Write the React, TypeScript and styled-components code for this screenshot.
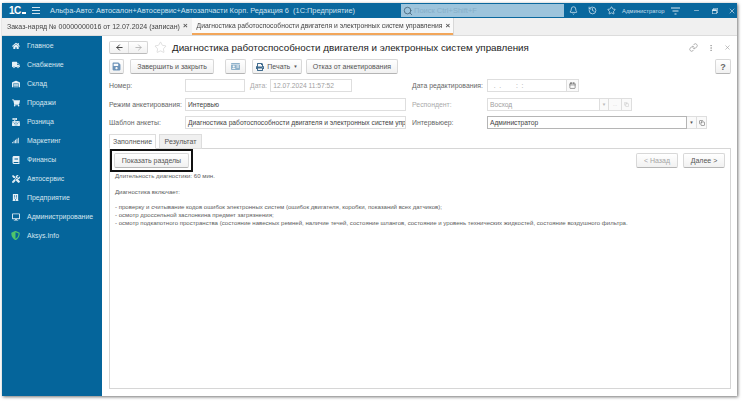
import React from 'react';
import styled, { createGlobalStyle } from 'styled-components';
import { Bell, History, Star, Link, MoreVertical, X, ArrowLeft, ArrowRight, Calendar, Search, Copy, Minus } from 'lucide-react';
import { FaHome, FaTruck, FaWarehouse, FaShoppingCart, FaCashRegister, FaSignal, FaBook, FaTools, FaBuilding, FaDesktop, FaPrint, FaSave, FaShieldAlt, FaRegWindowRestore, FaIdCard } from 'react-icons/fa';

const Global = createGlobalStyle`
  html, body { margin: 0; padding: 0; background: #fff; width: 743px; height: 401px; overflow: hidden; }
  * { box-sizing: border-box; }
  body { font-family: "Liberation Sans", Arial, sans-serif; color: #444; }
`;

const Frame = styled.div`
  width: 735px; height: 393px; margin: 3px 0 0 2px;
  display: flex; flex-direction: column;
  box-shadow: 1px 1px 3px rgba(0,0,0,.55);
  background: #e9e9e9; overflow: hidden;
  filter: blur(0.45px);
`;
const TitleBar = styled.header`
  height: 15px; flex: none; background: #0a689e; color: #cfe2ee;
  display: flex; align-items: center; font-size: 7.4px;
`;
const Logo = styled.span`
  width: 17px; margin-left: 7px; color: #fff; font: bold 10px "Liberation Sans", sans-serif; letter-spacing: -.5px;
  display: flex; align-items: baseline; flex: none;
  &::after { content: ''; display: block; width: 5px; height: 2px; background: #fff; margin-left: 1px; }
`;
const Burger = styled.span`
  width: 8px; height: 7px; margin-left: 6px; flex: none;
  background: linear-gradient(#cfe2ee 1px, transparent 1px, transparent 3px, #cfe2ee 3px, #cfe2ee 4px, transparent 4px, transparent 6px, #cfe2ee 6px);
`;
const AppName = styled.span`width: 350px; flex: none; margin-left: 10px; white-space: pre;`;
const SearchBox = styled.div`
  width: 163px; height: 13px; flex: none; margin-left: 1px; background: #9dc4dc; display: flex; align-items: center; gap: 1px; padding-left: 2px;
  color: #86afc9; font-size: 7.5px; white-space: nowrap;
`;
const TopIcons = styled.div`display: flex; align-items: center; color: #d5e6f0; flex: 1;`;
const TopIcon = styled.span<{ $w: number }>`width: ${p => p.$w}px; display: flex; justify-content: center; flex: none;`;
const UserName = styled.span`font-size: 5.9px; width: 48px; margin-left: 2px; white-space: nowrap; color: #c8deeb; flex: none;`;

const TabBar = styled.nav`
  height: 18px; flex: none; background: #f0f0f0; display: flex; border-bottom: 1px solid #dcdcdc;
`;
const Tab = styled.div<{ $active?: boolean }>`
  display: flex; align-items: center; gap: 3px; white-space: nowrap; color: #444;
  font-size: ${p => (p.$active ? '6.76px' : '7px')};
  padding: ${p => (p.$active ? '0 3px 0 5px' : '0 4px 0 5px')};
  height: 16px; position: relative;
  ${p => p.$active ? 'background:#fafafa; border-bottom: 1px solid #f2a65a; box-shadow: 0 1px 0 #f2a65a;' : ''}
  &::after { content: ''; position: absolute; right: -1px; top: 0; height: 18px; width: 1px; background: #d8d8d8; }
`;
const TabClose = styled.span`font-size: 8px; font-weight: bold; color: #555; line-height: 1;`;

const Body = styled.div`flex: 1; display: flex; min-height: 0;`;
const Sidebar = styled.aside`width: 100px; flex: none; background: #05659b; color: #d6e6f0;`;
const NavItem = styled.div`
  height: 19px; display: flex; align-items: center; padding-left: 9px; gap: 7px; font-size: 6.95px; white-space: nowrap;
`;
const NavIcon = styled.span<{ $c?: string }>`width: 9px; display: flex; justify-content: center; color: ${p => p.$c || '#e6f0f6'};`;

const Main = styled.main`
  flex: 1; background: #fff; display: flex; flex-direction: column; padding: 5px 6px 7px 7px; min-width: 0;
`;
const HeadRow = styled.div`height: 13px; display: flex; align-items: center; flex: none;`;
const NavGroup = styled.div`
  width: 39px; height: 13px; display: flex; border: 1px solid #d5d5d5; border-bottom-color: #bbb; border-radius: 2px;
  background: linear-gradient(#fff, #f1f1f1);
`;
const NavBtn = styled.span<{ $off?: boolean }>`
  flex: 1; display: flex; align-items: center; justify-content: center; color: ${p => (p.$off ? '#aaa' : '#333')};
  & + & { border-left: 1px solid #ddd; }
`;
const FavStar = styled.span`width: 13px; margin: 0 5px 0 6px; color: #cfcfcf; display: flex;`;
const Title = styled.h1`margin: 0; font-size: 9.8px; font-weight: normal; color: #222; white-space: nowrap; flex: 1;`;
const HeadTools = styled.div`display: flex; align-items: center; color: #999; gap: 9px;`;

const CmdBar = styled.div`height: 15px; margin-top: 5px; display: flex; align-items: center; flex: none;`;
const Btn = styled.div<{ $w: number; $ml?: number; $off?: boolean }>`
  width: ${p => p.$w}px; height: 15px; margin-left: ${p => p.$ml || 0}px; flex: none;
  display: flex; align-items: center; justify-content: center; gap: 3px;
  border: 1px solid #d8d8d8; border-bottom-color: #b5b5b5; border-radius: 2px;
  background: linear-gradient(#fff, #f1f1f1); font-size: 7px; color: ${p => (p.$off ? '#a5a5a5' : '#555')}; white-space: nowrap;
`;
const HelpBtn = styled(Btn)`font-size: 9px; font-weight: bold; color: #666;`;
const Caret = styled.span`font-size: 4.5px; color: inherit;`;
const Spacer = styled.div`flex: 1;`;

const Form = styled.div`display: grid; grid-template-columns: 76px 221px 81px 1fr; margin-top: 5px; row-gap: 5.5px; flex: none;`;
const Label = styled.div<{ $off?: boolean; $ml?: number }>`
  font-size: 6.9px; color: ${p => (p.$off ? '#aaa' : '#666')}; display: flex; align-items: center; height: 13px; white-space: nowrap; margin-left: ${p => p.$ml || 0}px;
`;
const Cell = styled.div`display: flex; align-items: center; height: 13px; min-width: 0;`;
const Input = styled.div<{ $w?: number; $off?: boolean; $strong?: boolean; $ml?: number }>`
  ${p => (p.$w ? `width:${p.$w}px; flex:none;` : 'flex:1;')}
  margin-left: ${p => p.$ml || 0}px;
  height: 13px; border: 1px solid ${p => (p.$strong ? '#b5b5b5' : '#dedede')}; background: #fff; font-size: 6.7px; padding-left: 2px;
  color: ${p => (p.$off ? '#a0a0a0' : '#444')}; display: flex; align-items: center; overflow: hidden; white-space: pre;
`;
const Addon = styled.div<{ $w?: number; $off?: boolean }>`
  width: ${p => p.$w || 10}px; height: 13px; flex: none; border: 1px solid #dedede; border-left: 0; background: #fafafa;
  display: flex; align-items: center; justify-content: center; font-size: 4.5px; color: ${p => (p.$off ? '#bbb' : '#555')};
`;

const TabsRow = styled.div`display: flex; margin-top: 5px; height: 15px; flex: none; align-items: flex-end; position: relative; z-index: 1;`;
const PageTab = styled.div<{ $active?: boolean; $w: number }>`
  width: ${p => p.$w}px; height: 15px; margin-right: 3px; font-size: 7px; color: #555;
  display: flex; align-items: center; justify-content: center;
  border: 1px solid #ddd; border-bottom: 1px solid ${p => (p.$active ? '#fff' : '#ddd')};
  background: ${p => (p.$active ? '#fff' : '#f0f0f0')};
`;
const Panel = styled.section`flex: 1; margin-top: -1px; border: 1px solid #d6d6d6; min-height: 0;`;
const PanelTop = styled.div`display: flex; align-items: flex-start; height: 24px;`;
const Highlight = styled.div`
  width: 83px; height: 23px; border: 2px solid #111; display: flex; align-items: center; justify-content: center; flex: none;
`;
const Pager = styled.div`display: flex; gap: 5px; padding: 4px 5px 0 0;`;
const PanelText = styled.div`padding-left: 5px; font-size: 6.07px; color: #5c5c5c; white-space: nowrap;`;
const Para = styled.div<{ $mt?: number }>`height: 7.7px; line-height: 7.7px; margin-top: ${p => p.$mt || 0}px;`;

const nav: [React.ReactNode, string, string?][] = [
  [<FaHome size={8} />, 'Главное'],
  [<FaTruck size={8} />, 'Снабжение'],
  [<FaWarehouse size={8} />, 'Склад'],
  [<FaShoppingCart size={8} />, 'Продажи'],
  [<FaCashRegister size={8} />, 'Розница'],
  [<FaSignal size={7} />, 'Маркетинг'],
  [<FaBook size={8} />, 'Финансы'],
  [<FaTools size={8} />, 'Автосервис'],
  [<FaBuilding size={7} />, 'Предприятие'],
  [<FaDesktop size={8} />, 'Администрирование'],
  [<FaShieldAlt size={9} />, 'Aksys.Info', '#4fc56a'],
];

export default function App() {
  return (
    <>
      <Global />
      <Frame>
        <TitleBar>
          <Logo>1С</Logo>
          <Burger />
          <AppName>Альфа-Авто: Автосалон+Автосервис+Автозапчасти Корп. Редакция 6  (1С:Предприятие)</AppName>
          <SearchBox><Search size={10} color="#44647a" strokeWidth={2} />Поиск Ctrl+Shift+F</SearchBox>
          <TopIcons>
            <TopIcon $w={19}><Bell size={9} /></TopIcon>
            <TopIcon $w={19}><History size={9} /></TopIcon>
            <TopIcon $w={18}><Star size={9} /></TopIcon>
            <UserName>Администратор</UserName>
            <TopIcon $w={11}><svg width="9" height="8" viewBox="0 0 9 8"><path d="M0 1h9M1.5 4h6M3.5 7h2" stroke="#d5e6f0" strokeWidth="1" /></svg></TopIcon>
            <TopIcon $w={30}><Minus size={7} /></TopIcon>
            <TopIcon $w={8}><FaRegWindowRestore size={6} /></TopIcon>
            <TopIcon $w={26}><X size={8} /></TopIcon>
          </TopIcons>
        </TitleBar>
        <TabBar>
          <Tab>Заказ-наряд № 00000000016 от 12.07.2024 (записан)<TabClose>×</TabClose></Tab>
          <Tab $active>Диагностика работоспособности двигателя и электронных систем управления<TabClose>×</TabClose></Tab>
        </TabBar>
        <Body>
          <Sidebar>
            {nav.map(([icon, label, c]) => (
              <NavItem key={label}><NavIcon $c={c}>{icon}</NavIcon>{label}</NavItem>
            ))}
          </Sidebar>
          <Main>
            <HeadRow>
              <NavGroup>
                <NavBtn><ArrowLeft size={9} strokeWidth={2.4} /></NavBtn>
                <NavBtn $off><ArrowRight size={9} strokeWidth={2} /></NavBtn>
              </NavGroup>
              <FavStar><Star size={13} strokeWidth={1.2} /></FavStar>
              <Title>Диагностика работоспособности двигателя и электронных систем управления</Title>
              <HeadTools>
                <Link size={9} />
                <MoreVertical size={8} />
                <X size={7} />
              </HeadTools>
            </HeadRow>
            <CmdBar>
              <Btn $w={15}><FaSave size={9} color="#6d93b8" /></Btn>
              <Btn $w={84} $ml={6}>Завершить и закрыть</Btn>
              <Btn $w={21} $ml={11}><FaIdCard size={9} color="#8fb2cb" /></Btn>
              <Btn $w={50} $ml={6}><FaPrint size={8} color="#3f6b8e" />Печать<Caret>▼</Caret></Btn>
              <Btn $w={92} $ml={4}>Отказ от анкетирования</Btn>
              <Spacer />
              <HelpBtn $w={16}>?</HelpBtn>
            </CmdBar>
            <Form>
              <Label>Номер:</Label>
              <Cell>
                <Input $w={60} />
                <Label $off $ml={5}>Дата:</Label>
                <Input $w={82} $off $ml={3}>12.07.2024 11:57:52</Input>
              </Cell>
              <Label $ml={6}>Дата редактирования:</Label>
              <Cell>
                <Input $w={80} $off>  .  .        :  :</Input>
                <Addon $w={12}><Calendar size={7} /></Addon>
              </Cell>

              <Label>Режим анкетирования:</Label>
              <Cell><Input>Интервью</Input></Cell>
              <Label $off $ml={6}>Респондент:</Label>
              <Cell>
                <Input $w={113} $off>Восход</Input>
                <Addon $w={9} $off>▼</Addon>
                <Addon $w={13} $off>…</Addon>
                <Addon $w={10} $off><Copy size={5} /></Addon>
              </Cell>

              <Label>Шаблон анкеты:</Label>
              <Cell><Input>Диагностика работоспособности двигателя и электронных систем упр</Input></Cell>
              <Label $ml={6}>Интервьюер:</Label>
              <Cell>
                <Input $w={200} $strong>Администратор</Input>
                <Addon $w={10}>▼</Addon>
                <Addon $w={10}><Copy size={6} /></Addon>
              </Cell>
            </Form>
            <TabsRow>
              <PageTab $active $w={47}>Заполнение</PageTab>
              <PageTab $w={43}>Результат</PageTab>
            </TabsRow>
            <Panel>
              <PanelTop>
                <Highlight><Btn $w={75}>Показать разделы</Btn></Highlight>
                <Spacer />
                <Pager>
                  <Btn $w={42} $off>&lt; Назад</Btn>
                  <Btn $w={42}>Далее &gt;</Btn>
                </Pager>
              </PanelTop>
              <PanelText>
                <Para>Длительность диагностики: 60 мин.</Para>
                <Para $mt={8}>Диагностика включает:</Para>
                <Para $mt={8}>- проверку и считывание кодов ошибок электронных систем (ошибок двигателя, коробки, показаний всех датчиков);</Para>
                <Para>- осмотр дроссельной заслонкина предмет загрязнения;</Para>
                <Para>- осмотр подкапотного пространства (состояние навесных ремней, наличие течей, состояние шлангов, состояние и уровень технических жидкостей, состояние воздушного фильтра.</Para>
              </PanelText>
            </Panel>
          </Main>
        </Body>
      </Frame>
    </>
  );
}
